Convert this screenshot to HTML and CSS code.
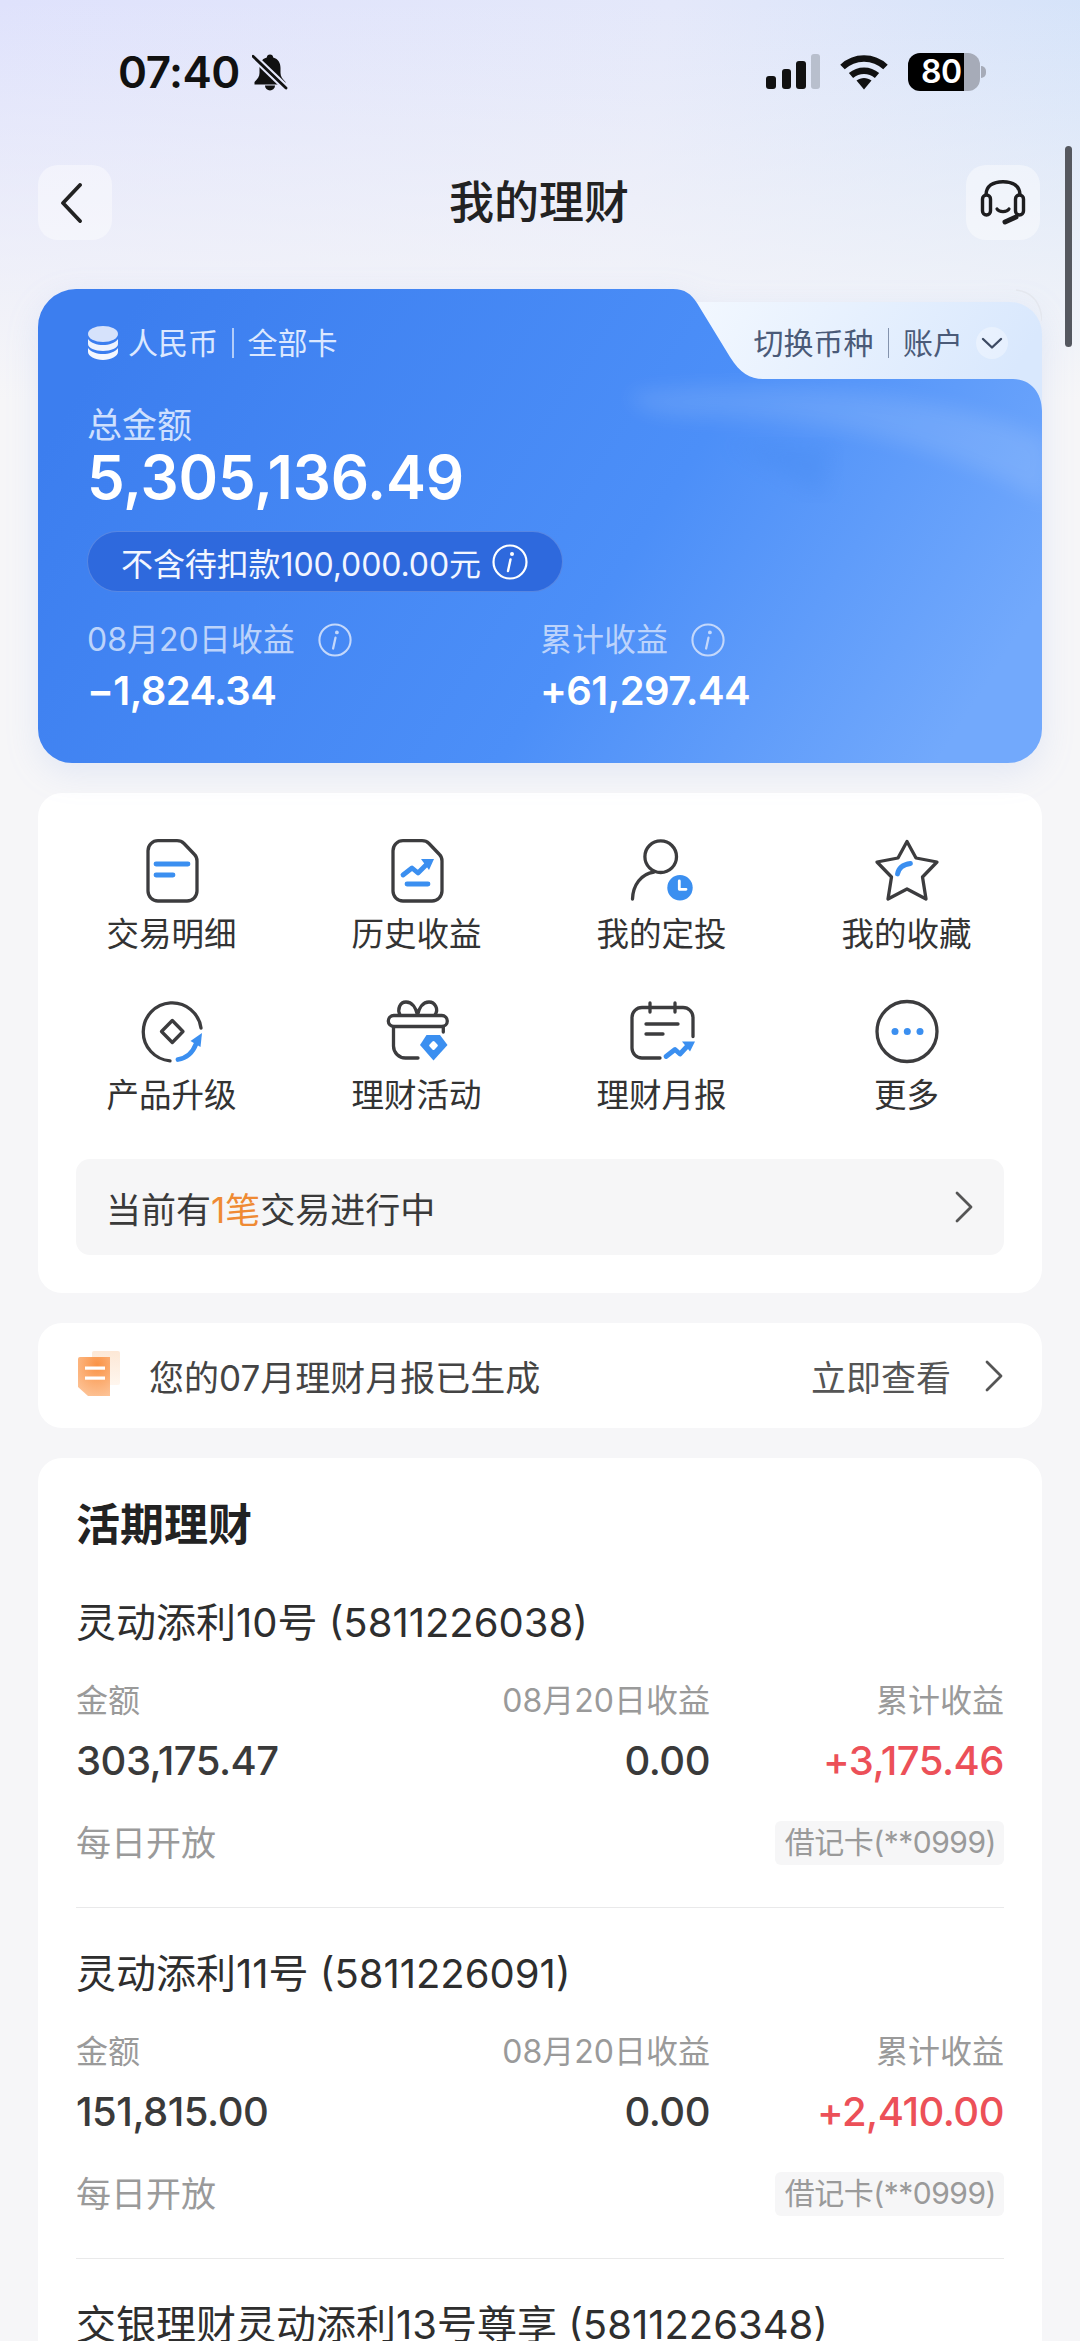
FILE: index.html
```html
<!DOCTYPE html>
<html lang="zh-CN">
<head>
<meta charset="utf-8">
<title>我的理财</title>
<link rel="stylesheet" href="styles.css">
</head>
<body>
<div class="page">
  <div class="scrollbar"></div>

  <div class="status">
    <div class="status-left">
      <span class="time">07:40</span>
      <svg class="bell" viewBox="0 0 36 38"><path d="M18 1.500c-2 0-3 1.200-3.200 3C9.500 6 7.500 10 7.500 15v5c0 3.500-2 6-5 9v2.500h31V29c-3-3-5-5.500-5-9v-5c0-5-2-9-7.300-10.500C21 2.700 20 1.500 18 1.500z" fill="#111"/><path d="M13 32.500a5 5 0 0 0 10 0z" fill="#111"/><path d="M1 3.300L34 35" stroke="#e4e7fb" stroke-width="7"/><path d="M1 3.300L34 35" stroke="#111" stroke-width="2.800" stroke-linecap="round"/></svg>
    </div>
    <div class="status-right">
      <svg class="signal" viewBox="0 0 54 36"><rect x="0" y="22" width="10" height="13" rx="3" fill="#111"/><rect x="16" y="15" width="9" height="20" rx="3" fill="#111"/><rect x="30" y="7" width="10" height="28" rx="3" fill="#111"/><rect x="45" y="0" width="9" height="35" rx="3" fill="#b8bfcd"/></svg>
      <svg class="wifi" viewBox="0 0 48 36"><path d="M2.500 13C14.500 1.500 33.500 1.500 45.500 13" fill="none" stroke="#111" stroke-width="6.500"/><path d="M11 21.500c7.500-6.500 18.500-6.500 26 0" fill="none" stroke="#111" stroke-width="6.500"/><path d="M16.500 26.500c4.500-3.500 10.500-3.500 15 0L24 35.500z" fill="#111"/></svg>
      <div class="battery"><span class="battery-level">80</span></div>
    </div>
  </div>

  <div class="nav">
    <div class="nav-btn">
      <svg class="back" viewBox="0 0 24 40"><path d="M21 2L4 20l17 18" fill="none" stroke="#222" stroke-width="3.800" stroke-linecap="round" stroke-linejoin="round"/></svg>
    </div>
    <h1 class="nav-title">我的理财</h1>
    <div class="nav-btn">
      <svg class="headset" viewBox="0 0 46 46"><path d="M6 15C6 6 13 1.700 23 1.700S40 6 40 15" fill="none" stroke="#1d1d1f" stroke-width="3.400"/><rect x="2.500" y="15" width="8" height="20" rx="4" fill="none" stroke="#1d1d1f" stroke-width="3.400"/><rect x="35.500" y="15" width="8" height="20" rx="4" fill="none" stroke="#1d1d1f" stroke-width="3.400"/><path d="M17 29c2 3.500 10 3.500 12 0" fill="none" stroke="#1d1d1f" stroke-width="3.200" stroke-linecap="round"/><path d="M25 42L36 37" fill="none" stroke="#1d1d1f" stroke-width="5" stroke-linecap="round"/></svg>
    </div>
  </div>

  <section class="hero">
    <svg class="hero-bg" viewBox="0 0 1004 474">
      <defs>
        <linearGradient id="blue" x1="0" y1="0.35" x2="1" y2="0.65"><stop offset="0" stop-color="#3c7eef"/><stop offset="0.6" stop-color="#4c8ff8"/><stop offset="1" stop-color="#72a9fc"/></linearGradient>
        <linearGradient id="tab" x1="0" y1="0" x2="1" y2="0.2"><stop offset="0" stop-color="#f6faff"/><stop offset="1" stop-color="#d9e8fd"/></linearGradient>
        <clipPath id="shape"><path d="M38 0H635C647 0 653 5 659 14L692 68C702 84 712 90 725 90H975C993 90 1004 104 1004 122V440A34 34 0 0 1 970 474H34A34 34 0 0 1 0 440V38A38 38 0 0 1 38 0Z"/></clipPath>
        <filter id="soft"><feGaussianBlur stdDeviation="10"/></filter>
      </defs>
      <path d="M600 13H972A32 32 0 0 1 1004 45V140H600Z" fill="url(#tab)"/>
      <path d="M978 1C994 3 1003 14 1004 32" fill="none" stroke="#e4e7ee" stroke-width="1.500"/>
      <path d="M38 0H635C647 0 653 5 659 14L692 68C702 84 712 90 725 90H975C993 90 1004 104 1004 122V440A34 34 0 0 1 970 474H34A34 34 0 0 1 0 440V38A38 38 0 0 1 38 0Z" fill="url(#blue)"/>
      <g clip-path="url(#shape)">
        <path d="M590 105C700 85 900 100 1010 150V214C930 170 830 135 700 130C650 128 600 130 590 105Z" fill="#fff" opacity=".11" filter="url(#soft)"/>
        <path d="M692 154L795 158L784 208Z" fill="#4387ee" opacity=".3" filter="url(#soft)"/>
      </g>
    </svg>
    <div class="hero-content">
      <div class="hero-top">
        <div class="scope">
          <svg class="coins" viewBox="0 0 32 34"><ellipse cx="16" cy="8" rx="15" ry="8" fill="#d6e2fb"/><path d="M1 13c3 4 9 6 15 6s12-2 15-6v5c0 4-7 7-15 7s-15-3-15-7z" fill="#eef3fe"/><path d="M1 22c3 4 9 6 15 6s12-2 15-6v4c0 4-7 8-15 8S1 30 1 26z" fill="#f5f8ff"/></svg>
          <span>人民币</span><i class="sep"></i><span>全部卡</span>
        </div>
        <div class="switch">
          <span>切换币种</span><i class="sep sep-dark"></i><span>账户</span>
          <svg class="switch-arrow" viewBox="0 0 32 32"><circle cx="16" cy="16" r="16" fill="#fff" opacity=".35"/><path d="M7 12L16 20.500L25 12" fill="none" stroke="#3d4a63" stroke-width="2.400" stroke-linecap="round" stroke-linejoin="round"/></svg>
        </div>
      </div>
      <div class="total-label">总金额</div>
      <div class="total-value">5,305,136.49</div>
      <div class="pill"><span>不含待扣款100,000.00元</span>
        <svg class="info" viewBox="0 0 36 36"><circle cx="18" cy="18" r="16.500" fill="none" stroke="#fff" stroke-width="2.200"/><circle cx="20" cy="10" r="2" fill="#fff"/><path d="M18.500 15.500L16 27" stroke="#fff" stroke-width="2.400" stroke-linecap="round"/></svg>
      </div>
      <div class="stats">
        <div class="stat">
          <div class="stat-label"><span>08月20日收益</span><svg class="info info-dim" viewBox="0 0 36 36"><circle cx="18" cy="18" r="16.500" fill="none" stroke="#c4d8fb" stroke-width="2.200"/><circle cx="20" cy="10" r="2" fill="#c4d8fb"/><path d="M18.500 15.500L16 27" stroke="#c4d8fb" stroke-width="2.400" stroke-linecap="round"/></svg></div>
          <div class="stat-value">−1,824.34</div>
        </div>
        <div class="stat">
          <div class="stat-label"><span>累计收益</span><svg class="info info-dim" viewBox="0 0 36 36"><circle cx="18" cy="18" r="16.500" fill="none" stroke="#c4d8fb" stroke-width="2.200"/><circle cx="20" cy="10" r="2" fill="#c4d8fb"/><path d="M18.500 15.500L16 27" stroke="#c4d8fb" stroke-width="2.400" stroke-linecap="round"/></svg></div>
          <div class="stat-value">+61,297.44</div>
        </div>
      </div>
    </div>
  </section>

  <section class="card shortcuts">
    <div class="shortcut-grid">
      <div class="shortcut">
        <svg class="ico" viewBox="0 0 64 64"><path class="ln" d="M18 1.700H37C40 1.700 42 2.500 44 4.500L54.500 15.500C56 17 57 19 57 22V52A10 10 0 0 1 47 62H18A10 10 0 0 1 8 52V11.700A10 10 0 0 1 18 1.700Z"/><path class="bl" d="M16 25H48M16 36H33"/></svg>
        <span>交易明细</span>
      </div>
      <div class="shortcut">
        <svg class="ico" viewBox="0 0 64 64"><path class="ln" d="M18 1.700H37C40 1.700 42 2.500 44 4.500L54.500 15.500C56 17 57 19 57 22V52A10 10 0 0 1 47 62H18A10 10 0 0 1 8 52V11.700A10 10 0 0 1 18 1.700Z"/><path class="bl" d="M18 36L27 29L33 34L42 25M22 45H43"/><path class="bf" d="M36 20H49L44 31Z"/></svg>
        <span>历史收益</span>
      </div>
      <div class="shortcut">
        <svg class="ico" viewBox="0 0 64 64"><circle class="ln" cx="30.700" cy="17.700" r="15.800"/><path class="ln" d="M2.500 60C3 46 11 35 24 33"/><circle class="bf" cx="50" cy="48.700" r="12.700"/><path d="M49.300 42V50.300H56" fill="none" stroke="#fff" stroke-width="2.800" stroke-linecap="round" stroke-linejoin="round"/></svg>
        <span>我的定投</span>
      </div>
      <div class="shortcut">
        <svg class="ico" viewBox="0 0 64 64"><path class="ln" d="M32 2.500L41 19L62 23L47.500 38L51 60L32 50L13 60L16.500 38L2 23L23 19Z"/><path class="bl" d="M22.500 35C23.500 29 28 25.500 35.500 24.500"/></svg>
        <span>我的收藏</span>
      </div>
      <div class="shortcut">
        <svg class="ico" viewBox="0 0 64 64"><path class="ln" d="M61 28A29 29 0 1 0 30 60.800"/><path class="ln" d="M32.300 20.500L43 31.500L32.300 42.500L21.500 31.500Z"/><path class="bl" d="M38 59.500C47 58 53 52 56 44"/><path class="bf" d="M62 33L60.500 47L50.500 41Z"/></svg>
        <span>产品升级</span>
      </div>
      <div class="shortcut">
        <svg class="ico" viewBox="0 0 64 64"><path class="ln" d="M15 15C12 9 15 2 21 2C27 2 31 8 32.500 15M32.500 15C34 8 38 2 44 2C50 2 54 9 50 15"/><rect class="ln" x="3.300" y="15.500" width="59" height="11" rx="5.500"/><path class="ln" d="M8.500 27V46A12 12 0 0 0 20.500 58H33M58.300 27V32"/><path class="bf" d="M41.500 35H55L62.500 45L48.500 60.500L35 45Z"/><rect x="45" y="42" width="7" height="7" rx="1.500" fill="#fff" transform="rotate(45 48.500 45.500)"/></svg>
        <span>理财活动</span>
      </div>
      <div class="shortcut">
        <svg class="ico" viewBox="0 0 64 64"><path class="ln" d="M63 36.500V17.500A10 10 0 0 0 53 7.500H12A10 10 0 0 0 2 17.500V48A10 10 0 0 0 12 58H30"/><path class="ln" d="M20 3V12M45 3V12M16 24H48M16 34H33"/><path class="bl" d="M36 56.500L45 49.500L50 54L57 46.500"/><path class="bf" d="M52 41.500H65L60 51.500Z"/></svg>
        <span>理财月报</span>
      </div>
      <div class="shortcut">
        <svg class="ico" viewBox="0 0 64 64"><circle class="ln" cx="32" cy="31.500" r="30"/><circle class="bf" cx="20" cy="31.500" r="3.500"/><circle class="bf" cx="32.300" cy="31.500" r="3.500"/><circle class="bf" cx="45" cy="31.500" r="3.500"/></svg>
        <span>更多</span>
      </div>
    </div>
    <div class="progress">
      <span>当前有<em>1笔</em>交易进行中</span>
      <svg class="chev" viewBox="0 0 20 32"><path d="M3 2l14 14L3 30" fill="none" stroke="#555" stroke-width="2.800" stroke-linecap="round" stroke-linejoin="round"/></svg>
    </div>
  </section>

  <section class="card report">
    <svg class="report-ico" viewBox="0 0 44 48"><defs><radialGradient id="doc" cx="0.6" cy="0.2" r="0.9"><stop offset="0" stop-color="#fa9346"/><stop offset="1" stop-color="#fdc59a"/></radialGradient><linearGradient id="sheet" x1="0" y1="0" x2="0" y2="1"><stop offset="0" stop-color="#fde8d6"/><stop offset="1" stop-color="#fff6ee"/></linearGradient></defs><rect x="14" y="0" width="28" height="34" rx="2" fill="url(#sheet)"/><path d="M2 6H32V45H10L0 36V8A2 2 0 0 1 2 6Z" fill="url(#doc)"/><rect x="7" y="15.500" width="20" height="3.200" fill="#fff"/><rect x="7" y="25.500" width="20" height="3.200" fill="#fff"/></svg>
    <span class="report-text">您的07月理财月报已生成</span>
    <span class="report-link">立即查看</span>
    <svg class="chev chev-report" viewBox="0 0 20 32"><path d="M3 2l14 14L3 30" fill="none" stroke="#555" stroke-width="2.800" stroke-linecap="round" stroke-linejoin="round"/></svg>
  </section>

  <section class="card products">
    <h2 class="products-title">活期理财</h2>

    <article class="product">
      <h3 class="product-name">灵动添利10号 (5811226038)</h3>
      <div class="metrics">
        <span class="m-label">金额</span><span class="m-label m-right">08月20日收益</span><span class="m-label m-right">累计收益</span>
        <span class="m-value">303,175.47</span><span class="m-value m-right">0.00</span><span class="m-value m-right m-up">+3,175.46</span>
      </div>
      <div class="product-foot"><span class="open">每日开放</span><span class="tag">借记卡(**0999)</span></div>
    </article>

    <article class="product">
      <h3 class="product-name">灵动添利11号 (5811226091)</h3>
      <div class="metrics">
        <span class="m-label">金额</span><span class="m-label m-right">08月20日收益</span><span class="m-label m-right">累计收益</span>
        <span class="m-value">151,815.00</span><span class="m-value m-right">0.00</span><span class="m-value m-right m-up">+2,410.00</span>
      </div>
      <div class="product-foot"><span class="open">每日开放</span><span class="tag">借记卡(**0999)</span></div>
    </article>

    <article class="product">
      <h3 class="product-name">交银理财灵动添利13号尊享 (5811226348)</h3>
    </article>
  </section>
</div>
</body>
</html>
```

FILE: styles.css
```css
* { box-sizing: border-box; }
html, body { margin: 0; padding: 0; }
body {
  width: 1080px;
  height: 2341px;
  overflow: hidden;
  font-family: Inter, "Noto Sans CJK SC", sans-serif;
  color: #333;
  background: #f6f6f7;
}
.page {
  position: relative;
  width: 1080px;
  height: 2341px;
  overflow: hidden;
  background:
    linear-gradient(180deg, rgba(246,246,248,0) 0, #f6f6f8 400px) no-repeat,
    linear-gradient(100deg, #dfe2fc 0, #e4e8fa 45%, #cfe1f9 85%, #d6e4fa 100%);
}
.scrollbar {
  position: absolute;
  left: 1065px;
  top: 146px;
  width: 7px;
  height: 201px;
  border-radius: 4px;
  background: #55585f;
}

/* status bar */
.status {
  height: 144px;
  padding: 0 94px 0 118px;
  display: flex;
  align-items: center;
  justify-content: space-between;
}
.status-left { display: flex; align-items: center; gap: 12px; }
.time { font-size: 44px; font-weight: 600; color: #111; line-height: 50px; letter-spacing: -0.5px; }
.bell { width: 36px; height: 38px; }
.status-right { display: flex; align-items: center; }
.signal { width: 54px; height: 36px; margin-right: 20px; }
.wifi { width: 48px; height: 36px; margin-right: 20px; }
.battery {
  position: relative;
  width: 72px;
  height: 38px;
  border-radius: 12px;
  background: linear-gradient(90deg, #000 78%, #a6abb8 78%);
  margin-right: 6px;
  display: flex;
  align-items: center;
  padding-left: 13px;
}
.battery::after {
  content: "";
  position: absolute;
  right: -6px;
  top: 13px;
  width: 5px;
  height: 12px;
  border-radius: 0 5px 5px 0;
  background: #a6abb8;
}
.battery-level { color: #fff; font-size: 32px; font-weight: 600; line-height: 38px; letter-spacing: -0.5px; }

/* nav */
.nav {
  margin: 21px 40px 0 38px;
  height: 75px;
  display: flex;
  align-items: center;
  justify-content: space-between;
}
.nav-btn {
  width: 74px;
  height: 75px;
  border-radius: 20px;
  background: rgba(255,255,255,.42);
  display: flex;
  align-items: center;
  justify-content: center;
}
.back { width: 24px; height: 40px; margin-right: 8px; }
.headset { width: 46px; height: 46px; }
.nav-title { margin: 0; font-size: 45px; line-height: 60px; font-weight: 500; color: #222; }

/* hero */
.hero {
  position: relative;
  margin: 49px 38px 0;
  height: 474px;
}
.hero-bg {
  position: absolute;
  left: 0;
  top: 0;
  width: 1004px;
  height: 474px;
  filter: drop-shadow(0 10px 16px rgba(110,150,230,.14));
}
.hero-content {
  position: relative;
  padding: 34px 0 0 49px;
  color: #fff;
}
.hero-top {
  height: 40px;
  display: flex;
  justify-content: space-between;
  align-items: center;
}
.scope, .switch {
  display: flex;
  align-items: center;
  font-size: 30px;
  line-height: 40px;
  color: #dce8ff;
}
.coins { width: 32px; height: 34px; margin-right: 9px; }
.sep { display: block; width: 1.500px; height: 30px; margin: 0 14px; background: rgba(255,255,255,.6); }
.sep-dark { background: #8493ad; margin: 0 14px; }
.switch { color: #4a5a78; padding-right: 34px; }
.switch-arrow { width: 32px; height: 32px; margin-left: 13px; }

.total-label { margin-top: 40px; font-size: 35px; line-height: 44px; color: #cfe0fe; }
.total-value { font-size: 60px; line-height: 60px; font-weight: 600; letter-spacing: -0.2px; }
.pill {
  margin-top: 24px;
  width: 476px;
  height: 61px;
  padding: 0 0 0 33px;
  border-radius: 31px;
  border: 1px solid rgba(255,255,255,.2);
  background: #2e69dd;
  display: flex;
  align-items: center;
  gap: 11px;
  font-size: 32px;
  white-space: nowrap;
  color: #f2f6ff;
  letter-spacing: -0.1px;
}
.info { width: 36px; height: 36px; flex: none; }
.stats {
  margin-top: 28px;
  display: grid;
  grid-template-columns: 453px 1fr;
}
.stat-label {
  display: flex;
  align-items: center;
  gap: 23px;
  font-size: 32px;
  line-height: 40px;
  color: #bcd3fb;
}
.info-dim { width: 34px; height: 34px; }
.stat-value { margin-top: 7px; font-size: 40px; line-height: 48px; font-weight: 600; color: #fff; letter-spacing: -0.6px; }

/* cards */
.card { margin: 30px 38px 0; background: #fff; border-radius: 24px; }

.shortcuts { height: 500px; padding: 46px 0 0; }
.shortcut-grid {
  display: grid;
  grid-template-columns: repeat(4, 245px);
  row-gap: 43px;
  padding: 0 12px 0 11px;
}
.shortcut {
  display: flex;
  flex-direction: column;
  align-items: center;
  font-size: 32.500px;
  line-height: 44px;
  color: #333;
}
.ico { width: 64px; height: 64px; margin-bottom: 10px; overflow: visible; }
.ln { fill: none; stroke: #3c3c3e; stroke-width: 3.300; stroke-linecap: round; stroke-linejoin: round; }
.bl { fill: none; stroke: #3b8ff0; stroke-width: 4.800; stroke-linecap: round; stroke-linejoin: round; }
.bf { fill: #3b8ff0; }

.progress {
  margin: 41px 38px 0;
  height: 96px;
  padding: 0 30px 0 30px;
  border-radius: 14px;
  background: #f6f6f7;
  display: flex;
  align-items: center;
  justify-content: space-between;
  font-size: 35px;
  color: #3a3a3a;
}
.progress em { font-style: normal; color: #ef8a33; }
.chev { width: 20px; height: 32px; flex: none; }

.report {
  height: 105px;
  padding: 0 38px 0 40px;
  display: flex;
  align-items: center;
}
.report-ico { width: 44px; height: 48px; flex: none; margin-top: -2px; }
.report-text { margin-left: 27px; font-size: 35px; color: #444; flex: 1; }
.report-link { font-size: 35px; color: #555; }
.chev-report { margin-left: 33px; }

.products { padding: 37px 38px 0; height: 1000px; }
.products-title { margin: 0 0 42px; font-size: 44px; line-height: 60px; font-weight: 600; color: #222; }
.product {
  margin-bottom: 40px;
  padding-bottom: 42px;
  border-bottom: 1px solid #e9e9ea;
}
.product:last-child { border-bottom: 0; }
.product-name { margin: 0; font-size: 40px; line-height: 52px; font-weight: 400; color: #2e2e2e; white-space: nowrap; }
.metrics {
  margin-top: 32px;
  display: grid;
  grid-template-columns: 240px 394px 294px;
  row-gap: 18px;
}
.m-label { font-size: 32px; line-height: 40px; color: #9a9a9a; }
.m-value { font-size: 40px; line-height: 44px; font-weight: 500; color: #3a3a3a; letter-spacing: -0.5px; }
.m-right { text-align: right; }
.m-up { color: #ec5058; }
.product-foot {
  margin-top: 38px;
  height: 44px;
  display: flex;
  justify-content: space-between;
  align-items: center;
}
.open { font-size: 35px; line-height: 44px; color: #9a9a9a; }
.tag {
  height: 44px;
  padding: 0 8px 0 10px;
  border-radius: 6px;
  background: #f6f6f7;
  font-size: 30px;
  line-height: 43px;
  color: #9a9a9a;
  letter-spacing: -0.5px;
}
```
